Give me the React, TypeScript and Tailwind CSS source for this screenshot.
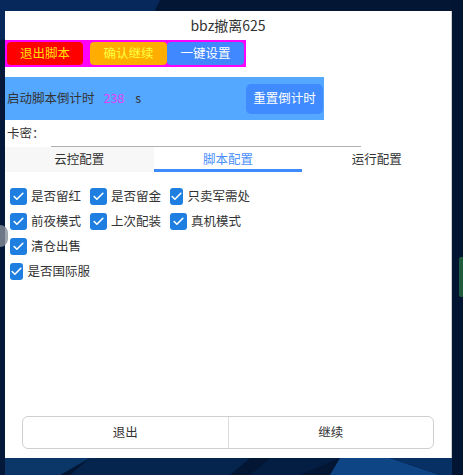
import { Check } from "lucide-react";

const OPTIONS = [
  ["是否留红", "是否留金", "只卖军需处"],
  ["前夜模式", "上次配装", "真机模式"],
  ["清仓出售"],
  ["是否国际服"],
];

const TABS = ["云控配置", "脚本配置", "运行配置"];

function Backdrop() {
  return (
    <svg className="absolute inset-0" width="463" height="475" viewBox="0 0 463 475">
      <rect width="463" height="475" fill="#031634" />
      <polygon points="0,0 160,0 150,20 0,40" fill="#06285a" />
      <polygon points="0,455 90,458 60,475 0,475" fill="#0a3768" />
      <polygon points="90,458 250,458 230,475 70,475" fill="#05254f" />
      <polygon points="270,458 340,458 300,475 250,475" fill="#041d42" />
      <polygon points="340,458 390,458 440,475 330,475" fill="#0d4585" />
      <polygon points="390,458 463,458 463,475 440,475" fill="#073064" />
      <polygon points="452,0 463,0 463,475 452,475" fill="#021634" />
      <polygon points="0,40 5,40 5,475 0,475" fill="#04193a" />
    </svg>
  );
}

export default function App() {
  return (
    <div
      className="relative w-[463px] h-[475px] overflow-hidden pt-[11px] pl-[5px]"
      style={{ fontFamily: '"Noto Sans CJK SC", "Noto Sans", sans-serif' }}
    >
      <Backdrop />

      <div className="relative w-[447px] h-[447px] bg-white flex flex-col border-r border-[#d0d0d0]">
        {/* title */}
        <div className="h-[29px] flex items-center justify-center text-[14px] text-[#333]">
          bbz撤离625
        </div>

        {/* top buttons */}
        <div className="w-[241px] h-[27px] bg-[#ff00ff] p-[2px] flex">
          <button className="w-[76px] h-[23px] rounded-[4px] bg-[#ff0000] text-[#ffe000] text-[12.5px] leading-none">
            退出脚本
          </button>
          <button className="ml-[7px] w-[77px] h-[23px] rounded-[4px] bg-[#ffad00] text-[#ffff40] text-[12.5px] leading-none">
            确认继续
          </button>
          <button className="w-[77px] h-[23px] rounded-[4px] bg-[#4088ff] text-white text-[12.5px] leading-none">
            一键设置
          </button>
        </div>

        {/* countdown */}
        <div className="mt-[10px] w-[319px] h-[43px] bg-[#55a8ff] flex items-center pl-[2px] pr-[1px] text-[12.5px] text-[#333]">
          <span>启动脚本倒计时</span>
          <span className="ml-[9px] text-[#e040fb]">238</span>
          <span className="ml-[11px]">s</span>
          <button className="ml-auto w-[77px] h-[30px] rounded-[5px] bg-[#3f8bff] text-white text-[12.5px]">
            重置倒计时
          </button>
        </div>

        {/* key */}
        <div className="h-[27px] flex items-center text-[12.5px] text-[#333] pl-[2px]">
          <span className="w-[44px]">卡密：</span>
          <div className="w-[310px] self-end h-px bg-[#b0b0b0]" />
        </div>

        {/* tabs */}
        <div className="grid grid-cols-3 h-[25px] text-[12.5px]">
          {TABS.map((t, i) => (
            <div
              key={t}
              className={
                i === 0
                  ? "flex items-center justify-center bg-[#f7f7f7] text-[#333]"
                  : i === 1
                    ? "flex items-center justify-center text-[#4a8ffc] border-b-[3px] border-[#3d8bff] pt-[3px]"
                    : "flex items-center justify-center text-[#333]"
              }
            >
              {t}
            </div>
          ))}
        </div>

        {/* options */}
        <div className="pt-[12px] pl-[5px] flex flex-col">
          {OPTIONS.map((row, r) => (
            <div key={r} className="h-[25px] flex items-center">
              {row.map((label) => (
                <div key={label} className="w-[80px] flex items-center gap-[4px] text-[12.5px] text-[#333]">
                  <span className="w-[17px] h-[17px] rounded-[3px] bg-[#1f7fe0] flex items-center justify-center">
                    <Check className="w-[13px] h-[13px] text-white" strokeWidth={3} />
                  </span>
                  <span className="whitespace-nowrap">{label}</span>
                </div>
              ))}
            </div>
          ))}
        </div>

        {/* bottom buttons */}
        <div className="mt-auto mb-[9px] mx-[17px] h-[33px] flex border border-[#cfcfcf] rounded-[6px] text-[12.5px] text-[#333]">
          <button className="flex-1 border-r border-[#dcdcdc]">退出</button>
          <button className="flex-1">继续</button>
        </div>
      </div>

      {/* floating overlays */}
      <div className="absolute left-[-8px] top-[225px] w-[16px] h-[22px] rounded-full bg-[#8a8f98]/80" />
      <div className="absolute right-0 top-[257px] w-[4px] h-[40px] rounded-l-[2px] bg-[#1f5b3e]" />
    </div>
  );
}
